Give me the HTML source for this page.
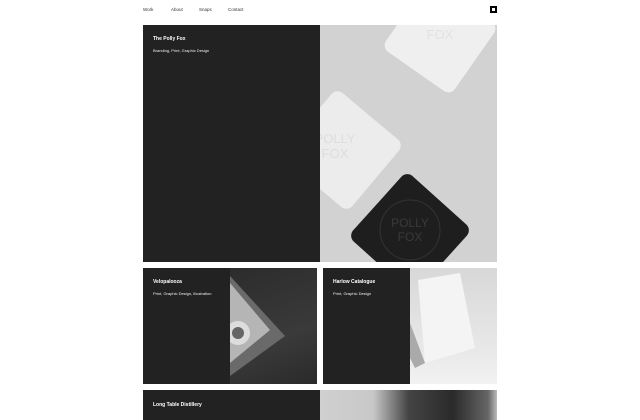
<!DOCTYPE html>
<html><head><meta charset="utf-8"><style>
*{margin:0;padding:0;box-sizing:border-box}
body{width:640px;height:412px;overflow:hidden;background:#fff;font-family:"Liberation Sans",sans-serif;position:relative}
.nav{position:absolute;top:7px;font-size:4.5px;color:#333}
.a{position:absolute;overflow:hidden}
.dk{background:#222}
.t{position:absolute;color:#fff;font-weight:bold;font-size:5px}
.s{position:absolute;color:#eee;font-size:4px}
</style></head><body>
<div class="nav" style="left:143px">Work</div>
<div class="nav" style="left:171px">About</div>
<div class="nav" style="left:199px">Snaps</div>
<div class="nav" style="left:228px">Contact</div>
<div style="position:absolute;left:490px;top:6px;width:7px;height:7px;border:2px solid #000;background:#fff"></div>

<div class="a dk" style="left:143px;top:25px;width:177px;height:237px">
<div class="t" style="left:10px;top:11px">The Polly Fox</div>
<div class="s" style="left:10px;top:23px">Branding, Print, Graphic Design</div>
</div>
<div class="a" style="left:320px;top:25px;width:177px;height:237px;background:#d2d2d2">
<svg width="177" height="237">
<rect x="-42" y="-42" width="84" height="84" rx="8" fill="#efefef" transform="translate(120,12) rotate(35)"/>
<text x="120" y="14" font-size="13" fill="#e2e2e2" text-anchor="middle" font-family="Liberation Sans">FOX</text>
<rect x="-44" y="-44" width="88" height="88" rx="8" fill="#ececec" transform="translate(22,125) rotate(40)"/>
<text x="15" y="118" font-size="13" fill="#dddddd" text-anchor="middle" font-family="Liberation Sans">POLLY</text>
<text x="15" y="133" font-size="13" fill="#dddddd" text-anchor="middle" font-family="Liberation Sans">FOX</text>
<rect x="-44" y="-44" width="88" height="88" rx="8" fill="#1e1e1e" transform="translate(90,208) rotate(42)"/>
<circle cx="90" cy="205" r="30" fill="none" stroke="#333" stroke-width="1"/>
<text x="90" y="202" font-size="12" fill="#3a3a3a" text-anchor="middle" font-family="Liberation Sans">POLLY</text>
<text x="90" y="216" font-size="12" fill="#3a3a3a" text-anchor="middle" font-family="Liberation Sans">FOX</text>
</svg>
</div>

<div class="a dk" style="left:143px;top:268px;width:174px;height:116px">
<div class="t" style="left:10px;top:11px">Velopalooza</div>
<div class="s" style="left:10px;top:23px">Print, Graphic Design, Illustration</div>
</div>
<div class="a" style="left:230px;top:268px;width:87px;height:116px;background:linear-gradient(160deg,#2c2c2c,#3a3a3a 60%,#2a2a2a)">
<svg width="87" height="116"><polygon points="0,8 55,68 0,108" fill="#6a6a6a"/><polygon points="0,15 40,62 0,95" fill="#b5b5b5"/><circle cx="8" cy="65" r="12" fill="#ddd"/><circle cx="8" cy="65" r="6" fill="#666"/></svg>
</div>
<div class="a dk" style="left:323px;top:268px;width:174px;height:116px">
<div class="t" style="left:10px;top:11px">Harlow Catalogue</div>
<div class="s" style="left:10px;top:23px">Print, Graphic Design</div>
</div>
<div class="a" style="left:410px;top:268px;width:87px;height:116px;background:linear-gradient(180deg,#d8d8d8,#e8e8e8 70%,#f2f2f2)">
<svg width="87" height="116"><polygon points="8,12 50,5 65,80 15,95" fill="#f4f4f4"/><polygon points="0,55 15,95 5,100 0,90" fill="#aaa"/></svg>
</div>

<div class="a dk" style="left:143px;top:390px;width:177px;height:30px">
<div class="t" style="left:10px;top:12px">Long Table Distillery</div>
</div>
<div class="a" style="left:320px;top:390px;width:177px;height:30px;background:linear-gradient(90deg,#d0d0d0 0%,#c8c8c8 30%,#444 50%,#2a2a2a 75%,#666 95%,#bbb 100%)"></div>
</body></html>
